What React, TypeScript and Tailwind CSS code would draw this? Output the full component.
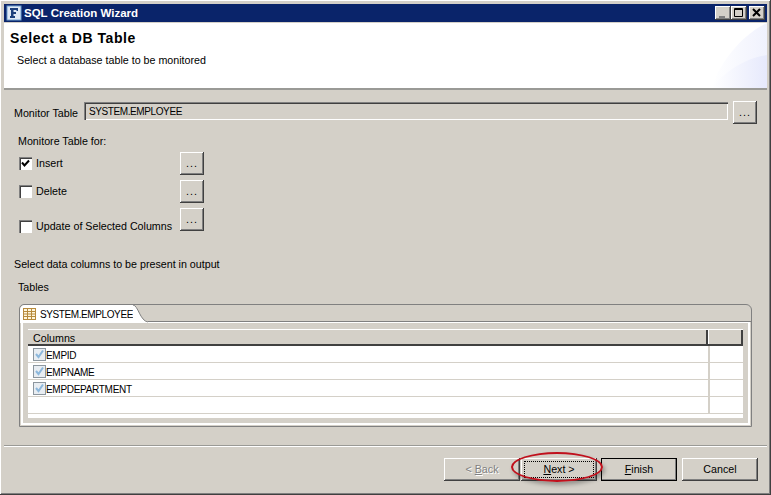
import React from "react";

const btn = "flex items-center justify-center bg-[#d4d0c8] shadow-[inset_-1px_-1px_0_#404040,inset_1px_1px_0_#ffffff,inset_-2px_-2px_0_#808080]";

function Dots({ className = "" }: { className?: string }) {
  return <div className={`${btn} w-6 h-[23px] tracking-[1px] ${className}`}>...</div>;
}

function Check({ checked }: { checked?: boolean }) {
  return (
    <div className="w-[13px] h-[13px] bg-white shrink-0 shadow-[inset_1px_1px_0_#808080,inset_2px_2px_0_#404040,inset_-1px_-1px_0_#ffffff]">
      {checked && (
        <svg width="13" height="13" viewBox="0 0 13 13">
          <path d="M3 5.5 L5.5 8.5 L10 3.5" fill="none" stroke="#000" strokeWidth="2" />
        </svg>
      )}
    </div>
  );
}

function CapButton({ kind }: { kind: "min" | "max" | "close" }) {
  return (
    <div className={`${btn} w-4 h-[14px]`}>
      <svg width="16" height="14" viewBox="0 0 16 14">
        {kind === "min" && <rect x="4" y="10" width="6" height="2" fill={"#808080"} />}
        {kind === "max" && <path d="M3.5 2.5 H11.5 V10.5 H3.5 Z M3.5 3.5 H11.5" fill="none" stroke="#000" />}
        {kind === "close" && <path d="M4 3 L11 10 M11 3 L4 10" stroke="#000" strokeWidth="2" />}
      </svg>
    </div>
  );
}

function Row({ name }: { name?: string }) {
  return (
    <div className="flex h-[17px] border-b border-[#d4d0c8]">
      <div className="flex-1 flex items-center pl-[5px]">
        {name && (
          <svg width="13" height="13" viewBox="0 0 13 13" className="shrink-0">
            <rect x="0.5" y="0.5" width="12" height="12" fill="#e8edf2" stroke="#8c969e" />
            <path d="M3 6 L5.5 9 L10 2.5" fill="none" stroke="#8db8dc" strokeWidth="2" />
          </svg>
        )}
        {name && <span className="text-[10px] tracking-[-0.3px] pt-[2px]">{name}</span>}
      </div>
      <div className="w-[35px] border-l-2 border-[#d4d0c8]" />
    </div>
  );
}

function WizButton({ children, className = "" }: { children: React.ReactNode; className?: string }) {
  return <div className={`${btn} w-[76px] h-[23px] ${className}`}>{children}</div>;
}

export default function App() {
  return (
    <div
      className="relative w-[771px] h-[495px] overflow-hidden bg-[#d4d0c8] text-[10.7px] text-black flex flex-col pt-1 px-1 pb-[3px] shadow-[inset_-1px_-1px_0_#404040,inset_1px_1px_0_#ffffff,inset_-2px_-2px_0_#808080]"
      style={{ fontFamily: '"Liberation Sans", Arial, sans-serif' }}
    >
      {/* title bar */}
      <div className="h-[18px] bg-[#0a246a] flex items-center pr-[2px] shrink-0">
        <svg width="16" height="16" viewBox="0 0 16 16" className="ml-[2px] shrink-0">
          <rect x="1" y="1" width="14" height="14" fill="#dfe9f5" stroke="#6f9fd0" />
          <path d="M4 3 H12 V6 H10.5 V5 H7.5 V7 H10 V9 H7.5 V11 H9 V13 H4 V11 H5 V5 H4 Z" fill="#1c3f7c" />
        </svg>
        <span className="ml-[2px] pt-px font-bold text-white text-[11.5px]">SQL Creation Wizard</span>
        <div className="ml-auto flex">
          <CapButton kind="min" />
          <CapButton kind="max" />
          <div className="w-[2px]" />
          <CapButton kind="close" />
        </div>
      </div>

      {/* banner */}
      <div className="relative h-[67px] mt-px bg-white border-b-2 border-[#9a9a96] shrink-0 overflow-hidden">
        <svg className="absolute right-0 top-0" width="55" height="66" viewBox="0 0 55 66">
          <defs>
            <linearGradient id="a" x1="0" x2="1" y1="0" y2="0">
              <stop offset="0" stopColor="#ffffff" />
              <stop offset="1" stopColor="#e6e9fc" />
            </linearGradient>
          </defs>
          <path d="M0 66 C4 45 28 12 55 0 V66 Z" fill="url(#a)" opacity="0.6" />
          <path d="M0 66 C6 55 28 36 55 32 V66 Z" fill="url(#a)" />
        </svg>
        <div className="pl-[6px] pt-[7px] font-bold text-[14px] leading-4 tracking-[0.55px]">Select a DB Table</div>
        <div className="pl-[13px] pt-[7px] leading-[14px]">Select a database table to be monitored</div>
      </div>

      {/* form */}
      <div className="flex items-start pt-[12px] pl-[10px] pr-[10px] h-[33px] shrink-0">
        <span className="w-[70px] mt-[4px] leading-[14px]">Monitor Table</span>
        <div className="flex-1 h-[18px] pl-[5px] flex items-center text-[10px] tracking-[-0.4px] shadow-[inset_1px_1px_0_#808080,inset_2px_2px_0_#404040,inset_-1px_-1px_0_#ffffff]">SYSTEM.EMPLOYEE</div>
        <Dots className="ml-[5px] mt-[-1px] shrink-0" />
      </div>

      <div className="pl-[14px] mt-[11px] leading-[14px]">Monitore Table for:</div>

      <div className="flex pl-[15px] mt-[4px] h-[23px]">
        <div className="w-[161px] flex items-center gap-1"><Check checked /><span>Insert</span></div>
        <Dots />
      </div>
      <div className="flex pl-[15px] mt-[5px] h-[23px]">
        <div className="w-[161px] flex items-center gap-1"><Check /><span>Delete</span></div>
        <Dots />
      </div>
      <div className="flex pl-[15px] mt-[5px] h-[23px]">
        <div className="w-[161px] flex items-center gap-1 mt-[12px] h-[13px] whitespace-nowrap"><Check /><span>Update of Selected Columns</span></div>
        <Dots />
      </div>

      <div className="pl-[10px] mt-[26px] leading-[14px]">Select data columns to be present in output</div>
      <div className="pl-[14px] mt-[9px] leading-[14px]">Tables</div>

      {/* tab folder */}
      <div className="relative ml-[15px] mr-[15px] mt-[10px] h-[123px] flex flex-col border border-[#808080] rounded-tr-[6px] rounded-tl-[5px] bg-[#d4d0c8] shrink-0">
        <div className="h-[17px] relative shrink-0">
          <div className="absolute left-0 top-0 h-[18px] w-[114px] flex items-center bg-white rounded-tl-[5px] pl-[3px] gap-[4px]">
            <svg width="13" height="12" viewBox="0 0 13 12" className="shrink-0">
              <rect x="0.5" y="0.5" width="12" height="11" fill="#fff6dc" stroke="#b78a3c" />
              <path d="M0.5 3.5 H12.5 M0.5 6 H12.5 M0.5 8.5 H12.5 M4.5 0.5 V11.5 M8.5 0.5 V11.5" stroke="#b78a3c" fill="none" />
            </svg>
            <span className="text-[10px] tracking-[-0.4px] whitespace-nowrap">SYSTEM.EMPLOYEE</span>
          </div>
          <svg className="absolute left-[113px] top-0" width="16" height="18" viewBox="0 0 16 18">
            <path d="M0 0 C5 0 7 16 15 17 L0 18 Z" fill="#fff" />
            <path d="M0 0 C5 0 7 16 15 17" fill="none" stroke="#808080" />
          </svg>
          <div className="absolute left-[128px] right-0 bottom-0 h-px bg-[#808080]" />
        </div>
        <div className="flex-1 border-2 border-white border-t-[1px] mx-px mb-px pt-[6px] px-[5px] pb-[5px]">
          <div className="bg-white h-full">
            <div className="flex h-[17px]">
              <div className="flex-1 flex items-center pl-[5px] pt-px bg-[#d4d0c8] shadow-[inset_0_1px_0_#ffffff,inset_0_-2px_0_#404040,inset_-2px_0_0_#404040]">Columns</div>
              <div className="w-[35px] bg-[#d4d0c8] shadow-[inset_0_1px_0_#ffffff,inset_0_-2px_0_#404040,inset_-2px_0_0_#404040,inset_1px_0_0_#ffffff]" />
            </div>
            <Row name="EMPID" />
            <Row name="EMPNAME" />
            <Row name="EMPDEPARTMENT" />
            <Row />
          </div>
        </div>
      </div>

      {/* separator */}
      <div className="mt-[18px] h-[2px] border-t border-b border-t-[#9a9a96] border-b-white shrink-0" />

      {/* buttons */}
      <div className="flex mt-[11px] pl-[440px]">
        <WizButton className="text-[#808080] [text-shadow:1px_1px_0_#ffffff]"><span>&lt; <u>B</u>ack</span></WizButton>
        <WizButton className="ml-px">
          <span className="border border-dotted border-black w-[70px] h-[17px] flex items-center justify-center"><span><u>N</u>ext &gt;</span></span>
        </WizButton>
        <WizButton className="ml-[4px] outline outline-1 outline-black -outline-offset-1"><span><u>F</u>inish</span></WizButton>
        <WizButton className="ml-[5px]">Cancel</WizButton>
      </div>

      {/* annotation */}
      <div className="absolute left-[511px] top-[452px] w-[92px] h-[30px] rounded-[50%] border-2 border-[#c0101c] shadow-[2px_3px_4px_rgba(0,0,0,0.3)]" />
    </div>
  );
}
